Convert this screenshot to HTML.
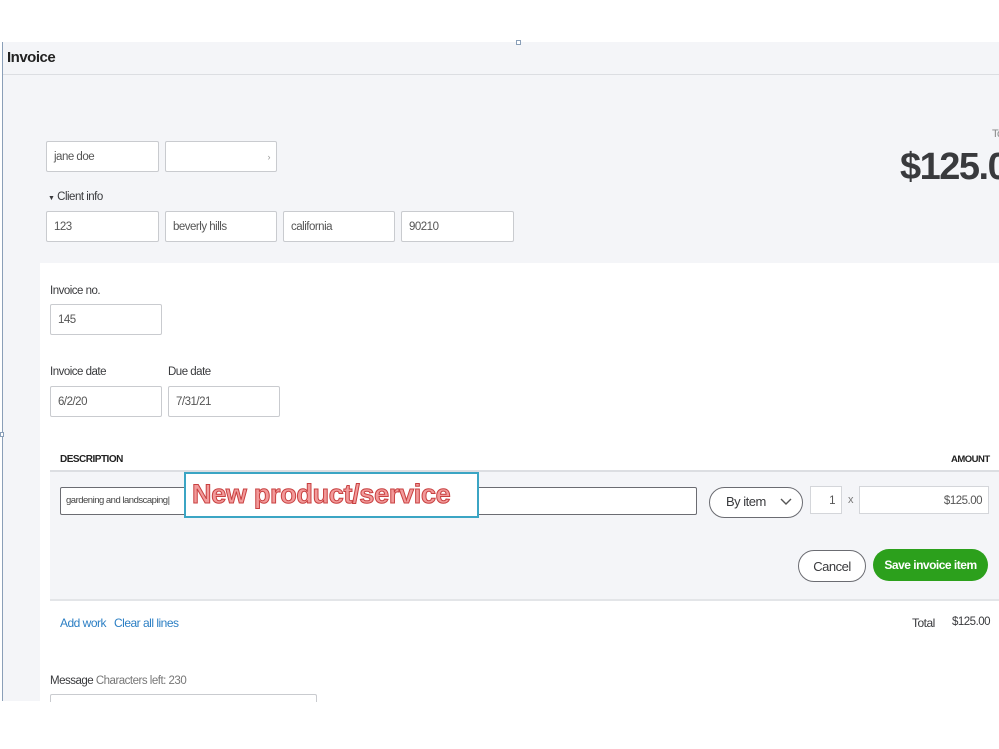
<!DOCTYPE html>
<html><head><meta charset="utf-8"><style>
*{margin:0;padding:0;box-sizing:border-box}
body{width:999px;height:749px;background:#fff;position:relative;overflow:hidden;font-family:"Liberation Sans",sans-serif;color:#393a3d;font-size:12px;letter-spacing:-0.5px}
.a{position:absolute}
.in{position:absolute;background:#fff;border:1px solid #c9cbcf;border-radius:2px;height:31px;line-height:31px;padding-left:7px;font-size:11.5px;color:#555}
.lbl{position:absolute;font-size:11.5px;color:#393a3d}
</style></head><body>
<div class="a" style="left:2px;top:42px;width:997px;height:659px;background:#f4f5f8"></div>
<div class="a" style="left:2px;top:42px;width:1px;height:659px;background:#8a9fb8"></div>
<div class="a" style="left:0;top:432px;width:4px;height:5px;border:1px solid #8a9fb8;background:#fff"></div>
<div class="a" style="left:516px;top:40px;width:5px;height:5px;border:1px solid #8a9fb8;background:#fff"></div>
<div class="a" style="left:7px;top:49px;font-size:15px;font-weight:bold;color:#222">Invoice</div>
<div class="a" style="left:3px;top:74px;width:996px;height:1px;background:#dcdee2"></div>

<div class="in" style="left:46px;top:141px;width:113px">jane doe</div>
<div class="in" style="left:165px;top:141px;width:112px"><span style="position:absolute;right:6px;font-size:9px;color:#999">›</span></div>
<div class="lbl" style="left:48px;top:191px"><span style="font-size:7px">▼</span> Client info</div>
<div class="in" style="left:46px;top:211px;width:113px">123</div>
<div class="in" style="left:165px;top:211px;width:112px">beverly hills</div>
<div class="in" style="left:283px;top:211px;width:112px">california</div>
<div class="in" style="left:401px;top:211px;width:113px">90210</div>

<div class="a" style="left:992px;top:128px;font-size:11px;color:#888">To</div>
<div class="a" style="left:900px;top:146px;font-size:38px;font-weight:bold;color:#393a3d;letter-spacing:-1.5px;white-space:nowrap">$125.00</div>

<div class="a" style="left:40px;top:263px;width:959px;height:438px;background:#fff"></div>
<div class="lbl" style="left:50px;top:285px">Invoice no.</div>
<div class="in" style="left:50px;top:304px;width:112px">145</div>
<div class="lbl" style="left:50px;top:366px">Invoice date</div>
<div class="lbl" style="left:168px;top:366px">Due date</div>
<div class="in" style="left:50px;top:386px;width:112px">6/2/20</div>
<div class="in" style="left:168px;top:386px;width:112px">7/31/21</div>

<div class="a" style="left:60px;top:454px;font-size:10px;font-weight:bold;color:#222">DESCRIPTION</div>
<div class="a" style="left:951px;top:454px;font-size:9.5px;font-weight:bold;color:#222">AMOUNT</div>
<div class="a" style="left:50px;top:470px;width:949px;height:131px;background:#f4f5f8;border-top:2px solid #dcdee2;border-bottom:2px solid #e3e5e8"></div>
<div class="a" style="left:60px;top:487px;width:637px;height:28px;background:#fff;border:1px solid #6b6c72;border-radius:2px;font-size:9.5px;line-height:26px;padding-left:5px;color:#444">gardening and landscaping|</div>
<div class="a" style="left:184px;top:472px;width:295px;height:46px;background:#fff;border:2px solid #3ba5c4"></div>
<div class="a" style="left:192px;top:479px;font-size:27px;font-weight:bold;color:#f29a9a;-webkit-text-stroke:1px #c84040;letter-spacing:-0.3px;white-space:nowrap">New product/service</div>
<div class="a" style="left:709px;top:487px;width:94px;height:31px;border:1.5px solid #6b6c72;border-radius:16px;background:#fff;font-size:13px;line-height:28px;padding-left:16px;color:#393a3d">By item
<svg class="a" style="left:70px;top:10px" width="12" height="8" viewBox="0 0 12 8"><path d="M1 1l5 5 5-5" fill="none" stroke="#555" stroke-width="1.4"/></svg></div>
<div class="a" style="left:810px;top:486px;width:32px;height:28px;background:#fff;border:1px solid #d4d6da;text-align:right;padding-right:6px;line-height:28px;font-size:11.5px;color:#555">1</div>
<div class="a" style="left:848px;top:494px;font-size:11px;color:#777">x</div>
<div class="a" style="left:859px;top:486px;width:130px;height:28px;background:#fff;border:1px solid #d4d6da;text-align:right;padding-right:6px;line-height:28px;font-size:11.5px;color:#555">$125.00</div>
<div class="a" style="left:798px;top:550px;width:68px;height:32px;border:1.5px solid #6b6c72;border-radius:16px;background:#fff;text-align:center;line-height:31px;font-size:13px;color:#393a3d">Cancel</div>
<div class="a" style="left:873px;top:549px;width:115px;height:32px;border-radius:16px;background:#2ca01c;text-align:center;line-height:32px;font-size:12px;font-weight:bold;color:#fff">Save invoice item</div>

<div class="a" style="left:60px;top:616px;font-size:12px;color:#2c7fc4">Add work</div>
<div class="a" style="left:114px;top:616px;font-size:12px;color:#2c7fc4">Clear all lines</div>
<div class="a" style="left:912px;top:616px;font-size:12px;color:#393a3d">Total</div>
<div class="a" style="left:952px;top:616px;font-size:11.5px;color:#393a3d">$125.00</div>
<div class="lbl" style="left:50px;top:675px">Message <span style="color:#777">Characters left: 230</span></div>
<div class="a" style="left:50px;top:694px;width:267px;height:8px;border:1px solid #c9cbcf;border-bottom:none;border-radius:2px 2px 0 0;background:#fff"></div>
</body></html>
